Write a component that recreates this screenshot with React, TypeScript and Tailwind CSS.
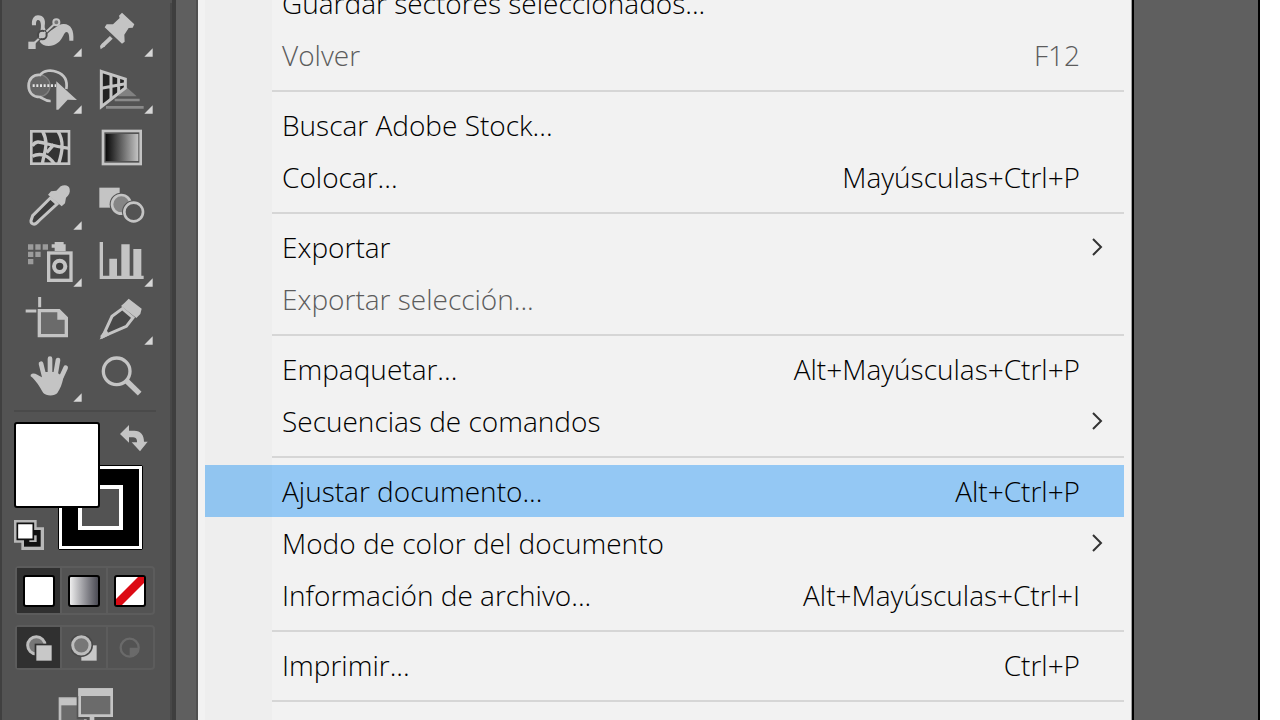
import React from 'react'

interface MenuEntry {
  label: string
  shortcut?: string
  submenu?: boolean
  disabled?: boolean
  active?: boolean
}

const groups: MenuEntry[][] = [
  [
    { label: 'Guardar sectores seleccionados...' },
    { label: 'Volver', shortcut: 'F12', disabled: true },
  ],
  [{ label: 'Buscar Adobe Stock...' }, { label: 'Colocar...', shortcut: 'Mayúsculas+Ctrl+P' }],
  [
    { label: 'Exportar', submenu: true },
    { label: 'Exportar selección...', disabled: true },
  ],
  [
    { label: 'Empaquetar...', shortcut: 'Alt+Mayúsculas+Ctrl+P' },
    { label: 'Secuencias de comandos', submenu: true },
  ],
  [
    { label: 'Ajustar documento...', shortcut: 'Alt+Ctrl+P', active: true },
    { label: 'Modo de color del documento', submenu: true },
    { label: 'Información de archivo...', shortcut: 'Alt+Mayúsculas+Ctrl+I' },
  ],
  [{ label: 'Imprimir...', shortcut: 'Ctrl+P' }],
]

interface ToolProps {
  name: string
  x: number
  y: number
  more?: boolean
  children: React.ReactNode
}

// icons are drawn on a 3x grid, x and y are the origin of the cell
const Tool: React.FC<ToolProps> = ({ name, x, y, more, children }) => (
  <button aria-label={name} className="flex items-center justify-center">
    <svg
      viewBox={`${x} ${y} 213 174`}
      className="w-[71px] h-[58px] shrink-0"
      fill="none"
      stroke="#c4c4c4"
      strokeWidth="8"
    >
      {children}
      {more && <path d={`M${x + 203} ${y + 136}v25h-25z`} fill="#d6d6d6" stroke="none" />}
    </svg>
  </button>
)

const Tools = () => (
  <div className="grid grid-cols-2 grid-rows-7 h-[403px] mt-[3px]">
    <Tool name="Curvatura" x={42} y={9} more>
      <path
        d="M96 76C94 56 103 46 114 46C131 46 138 60 134 78C133 88 140 94 150 92C164 88 172 73 190 72C212 71 223 90 220 122H208C208 106 206 96 199 96C188 98 188 136 146 138C122 138 112 120 118 102C125 88 125 60 115 60C108 60 108 68 108 76Z"
        fill="#c4c4c4"
        stroke="none"
      />
      <path d="M97 135L169 67" stroke="#535353" strokeWidth="13" />
      <path d="M97 135L169 67" strokeWidth="6" />
      <rect x="85" y="125" width="22" height="22" fill="#c4c4c4" stroke="none" />
      <circle cx="169" cy="67" r="9" fill="#777" strokeWidth="6" />
      <circle cx="127" cy="105" r="13" fill="#c4c4c4" stroke="#484848" strokeWidth="6" />
      <path d="M118 114L136 96" strokeWidth="6" />
    </Tool>
    <Tool name="Deformación de posición libre" x={255} y={9} more>
      <path
        d="M366 38L403 73L398 83L386 84L373 104L374 125L366 131L314 82L320 73L339 73L359 54L357 47Z"
        fill="#c4c4c4"
        stroke="none"
      />
      <path d="M334 112L308 137" strokeWidth="12" />
      <path d="M302 148L300 138L307 130L315 139Z" fill="#c4c4c4" stroke="none" />
    </Tool>
    <Tool name="Creador de formas" x={42} y={182} more>
      <circle cx="117" cy="259" r="33" fill="#666" stroke="#818181" strokeWidth="4" />
      <path d="M152 305C137 306 128 297 120 293C99 293 86 280 86 259C86 239 100 225 120 227C132 212 154 211 171 218C193 226 203 244 199 269" />
      <path d="M98 259H168" stroke="#e4e4e4" strokeDasharray="6 5" />
      <path d="M169 246L231 302L203 301L175 331H169Z" fill="#c4c4c4" stroke="none" />
    </Tool>
    <Tool name="Cuadrícula de perspectiva" x={255} y={182} more>
      <path d="M378 262L410 291H353L367 276Z" fill="#818181" stroke="none" />
      <path d="M344 302H419M318 324H431" stroke="#8a8a8a" />
      <path d="M304 216L376 239V266L304 322Z" fill="#222" strokeWidth="9" />
      <path d="M333 226V300M356 232V282M304 267L376 253" strokeWidth="9" />
    </Tool>

    <Tool name="Malla" x={42} y={9}>
      <rect x="94" y="49" width="113" height="97" fill="#333" />
      <path
        d="M97 93C113 66 130 92 208 100M128 49C148 86 132 112 127 147M174 49C192 78 188 108 176 146M97 124C120 112 146 120 163 147M140 113L162 88"
        strokeWidth="10"
      />
    </Tool>
    <Tool name="Degradado" x={255} y={9}>
      <defs>
        <linearGradient id="tool-gradient">
          <stop offset="0" stopColor="#080808" />
          <stop offset="1" stopColor="#c4c4c4" />
        </linearGradient>
      </defs>
      <rect x="309" y="48" width="113" height="99" />
      <rect x="317" y="57" width="98" height="81" fill="url(#tool-gradient)" stroke="none" />
    </Tool>
    <Tool name="Cuentagotas" x={42} y={182} more>
      <path
        d="M182 213C192 207 207 208 209 221C211 232 207 240 198 247L195 264L185 273L144 238L153 228L169 226Z"
        fill="#c4c4c4"
        stroke="none"
      />
      <path
        d="M151 248L98 301L93 316C92 326 103 330 111 322L119 314L171 266Z"
        fill="#3d3d3d"
        strokeWidth="9"
      />
    </Tool>
    <Tool name="Fusión" x={255} y={182}>
      <rect x="298" y="217" width="61" height="60" fill="#c4c4c4" stroke="none" />
      <circle cx="364" cy="267" r="35" fill="#535353" stroke="none" />
      <circle cx="364" cy="267" r="28" fill="#858585" />
      <circle cx="401" cy="290" r="35" fill="#535353" stroke="none" />
      <circle cx="401" cy="290" r="28" />
    </Tool>

    <Tool name="Rociar símbolos" x={42} y={10} more>
      <path
        d="M84 44h16v16h-16zM106 44h16v16h-16zM128 44h16v16h-16zM84 66h16v16h-16zM106 66h16v16h-16zM84 88h16v16h-16z"
        fill="#9b9b9b"
        stroke="none"
      />
      <path d="M155 44H164V37H191V44H197V64H164V54H155Z" fill="#c4c4c4" stroke="none" />
      <rect x="146" y="70" width="67" height="82" fill="#484848" strokeWidth="10" />
      <circle cx="179" cy="110" r="17" fill="#3d3d3d" strokeWidth="12" />
    </Tool>
    <Tool name="Gráfico de columnas" x={255} y={10} more>
      <path d="M304 37V143H431" strokeWidth="10" />
      <path d="M328 87h23v55h-23zM364 44h25v98h-25zM400 58h24v84h-24z" fill="#c4c4c4" stroke="none" />
    </Tool>
    <Tool name="Mesa de trabajo" x={42} y={183}>
      <path d="M119 201V232M77 243H109" strokeWidth="9" />
      <path d="M118 242H177L199 264V317H118Z" fill="#6b6b6b" strokeWidth="10" />
      <path d="M172 240V269H201Z" fill="#c4c4c4" stroke="none" />
    </Tool>
    <Tool name="Sector" x={255} y={183} more>
      <path d="M386 206L425 236L421 252L409 264L363 228L374 218Z" fill="#c4c4c4" stroke="none" />
      <path d="M367 236L336 259L308 320L379 289L399 263Z" fill="#484848" strokeWidth="9" />
      <path d="M305 327L301 318L318 297L328 315Z" fill="#c4c4c4" stroke="none" />
    </Tool>

    <Tool name="Mano" x={42} y={25} more>
      <path d="M123 72L133 112M150 57V108M174 61L166 108M197 84L181 119" strokeWidth="14" strokeLinecap="round" />
      <path
        d="M92 105C101 96 112 106 126 113V97H169L190 112C187 133 180 148 172 160C165 170 138 170 130 160C119 142 108 122 92 110Z"
        fill="#c4c4c4"
        stroke="none"
      />
    </Tool>
    <Tool name="Zoom" x={255} y={25}>
      <circle cx="350" cy="95" r="40" strokeWidth="10" />
      <path d="M380 124L419 162" strokeWidth="16" />
    </Tool>
  </div>
)

const ColorWell = () => (
  <div className="relative flex flex-col gap-3 h-[143px] pt-3">
    <button aria-label="Intercambiar relleno y trazo" className="self-end mr-2">
      <svg viewBox="0 0 84 87" className="w-7 h-[29px]" fill="#c4c4c4">
        <path d="M0 30L27 3V20H43C62 20 72 33 72 53H83L60 82L35 55H51C52 44 46 40 36 40H27V56Z" />
      </svg>
    </button>
    <div className="flex items-end gap-3.5">
      <button aria-label="Relleno y trazo por defecto">
        <svg viewBox="0 0 90 90" className="size-[30px]">
          <path d="M0 0H68V22H90V90H22V68H0Z" fill="#b8b8b8" />
          <path d="M30 30H80V80H30Z" fill="#111" />
          <path d="M46 46H68V66H46Z" fill="#b8b8b8" />
          <path d="M10 10H58V58H10Z" fill="#fff" stroke="#111" strokeWidth="5" />
        </svg>
      </button>
      <button
        aria-label="Trazo"
        className="flex size-[85px] rounded-[2px] border border-black bg-black"
      >
        <span className="flex items-center justify-center size-full border-[3px] border-white">
          <span className="size-[45px] border-4 border-white bg-[#535353]" />
        </span>
      </button>
    </div>
    <button aria-label="Relleno" className="absolute left-0 top-2.5 size-[86px] rounded-[3px] border-2 border-black bg-white" />
  </div>
)

const Modes = () => (
  <div className="flex flex-col gap-2.5 mt-[11px]">
    <div className="grid grid-cols-3 h-[49px] mx-px rounded border-2 border-[#5c5c5c] divide-x-2 divide-[#5c5c5c]">
      <button aria-label="Color" className="flex items-center justify-center bg-[#303030]">
        <span className="size-8 rounded-[3px] border-2 border-black bg-white" />
      </button>
      <button aria-label="Degradado" className="flex items-center justify-center">
        <span className="size-8 rounded-[3px] border-2 border-black bg-linear-to-r from-[#eeeeee] to-[#4c4c55]" />
      </button>
      <button aria-label="Ninguno" className="flex items-center justify-center">
        <span className="size-8 rounded-[3px] border-2 border-black bg-white">
          <svg viewBox="0 0 28 28" className="size-7">
            <path d="M0 28V22L22 0H28V6L6 28Z" fill="#dc0a14" />
          </svg>
        </span>
      </button>
    </div>
    <div className="grid grid-cols-3 h-[45px] mx-px rounded border-2 border-[#5c5c5c] divide-x-2 divide-[#5c5c5c]">
      <button aria-label="Dibujar normal" className="flex items-center justify-center bg-[#303030]">
        <svg viewBox="0 0 78 78" className="size-[26px]">
          <circle cx="31" cy="31" r="26" fill="#777" stroke="#bdbdbd" strokeWidth="9" />
          <path d="M26 26H78V78H26Z" fill="#303030" />
          <path d="M31 31H77V77H31Z" fill="#c8c8c8" />
        </svg>
      </button>
      <button aria-label="Dibujar detrás" className="flex items-center justify-center">
        <svg viewBox="0 0 78 78" className="size-[26px]">
          <path d="M31 31H77V77H31Z" fill="#c8c8c8" />
          <circle cx="31" cy="31" r="35" fill="#484848" />
          <circle cx="31" cy="31" r="26" fill="#777" stroke="#bdbdbd" strokeWidth="9" />
        </svg>
      </button>
      <button aria-label="Dibujar dentro" disabled className="flex items-center justify-center">
        <svg viewBox="0 0 78 78" className="size-[26px]">
          <circle cx="38" cy="38" r="27" fill="none" stroke="#6a6a6a" strokeWidth="7" />
          <path d="M38 38H64C64 52 52 64 38 64Z" fill="#6a6a6a" />
        </svg>
      </button>
    </div>
    <button aria-label="Modo de pantalla" className="self-center mt-2">
      <svg viewBox="0 0 162 120" className="w-[54px] h-10 overflow-visible">
        <path d="M6 32H82V110H6Z" fill="#6b6b6b" stroke="#bdbdbd" strokeWidth="8" />
        <path d="M6 32H66V52H6Z" fill="#c4c4c4" />
        <path d="M56 0H168V94H56Z" fill="#535353" />
        <path d="M65 5H161V83H65Z" fill="#6b6b6b" stroke="#c4c4c4" strokeWidth="8" />
        <path d="M61 1H165V24H61Z" fill="#c4c4c4" />
        <path d="M95 87H109V100H95Z" fill="#c4c4c4" />
      </svg>
    </button>
  </div>
)

const MenuItem: React.FC<MenuEntry> = ({ label, shortcut, submenu, disabled, active }) => (
  <button
    role="menuitem"
    disabled={disabled}
    className={`flex items-center w-full h-[52px] pl-[77px] text-left whitespace-nowrap ${disabled ? 'text-[#5c5c5c]' : 'text-black'} ${active ? 'bg-[linear-gradient(to_right,#91c5f0_67px,#94c8f4_67px)]' : ''}`}
  >
    <span className="flex-1">{label}</span>
    {shortcut && <kbd className="font-[inherit]">{shortcut}</kbd>}
    <span className="w-11 pl-[11px]">
      {submenu && (
        <svg viewBox="0 0 12 18" className="w-3 h-[18px]" fill="none" stroke="#333" strokeWidth="2">
          <path d="M2 1L10 9L2 17" />
        </svg>
      )}
    </span>
  </button>
)

const App = () => {
  return (
    <div className="flex h-screen overflow-hidden bg-white font-['Open_Sans','Noto_Sans',sans-serif]">
      <aside className="w-[176px] shrink-0 overflow-hidden border-l-2 border-r-4 border-l-[#404040] border-r-[#3e3e3e] bg-[#535353]">
        <div className="h-full border-r-2 border-[#474747] pl-3 pr-3.5">
          <Tools />
          <hr className="mt-1 border-t-2 border-[#4a4a4a]" />
          <ColorWell />
          <Modes />
        </div>
      </aside>
      <div className="w-[22px] shrink-0 border-r-2 border-[#505050] bg-[#5f5f5f]" />
      <nav
        role="menu"
        className="flex-1 min-w-0 overflow-hidden border-r border-[#a0a0a0] bg-[#f2f2f2] pl-[7px] pr-[7px] text-[28px] leading-9 font-light"
      >
        <div className="-mt-[23px] min-h-[calc(100%+23px)] bg-[linear-gradient(to_right,#eeeeee_67px,#f2f2f2_67px)]">
          {groups.map((group) => (
            <React.Fragment key={group[0].label}>
              {group.map((item) => (
                <MenuItem key={item.label} {...item} />
              ))}
              <div role="separator" className="h-[18px] ml-[67px] pt-[9px]">
                <div className="h-0.5 bg-[#d6d6d6]" />
              </div>
            </React.Fragment>
          ))}
        </div>
      </nav>
      <div className="w-32 shrink-0 border-l-2 border-r-2 border-black bg-[#5f5f5f] mr-5" />
    </div>
  )
}

export default App
